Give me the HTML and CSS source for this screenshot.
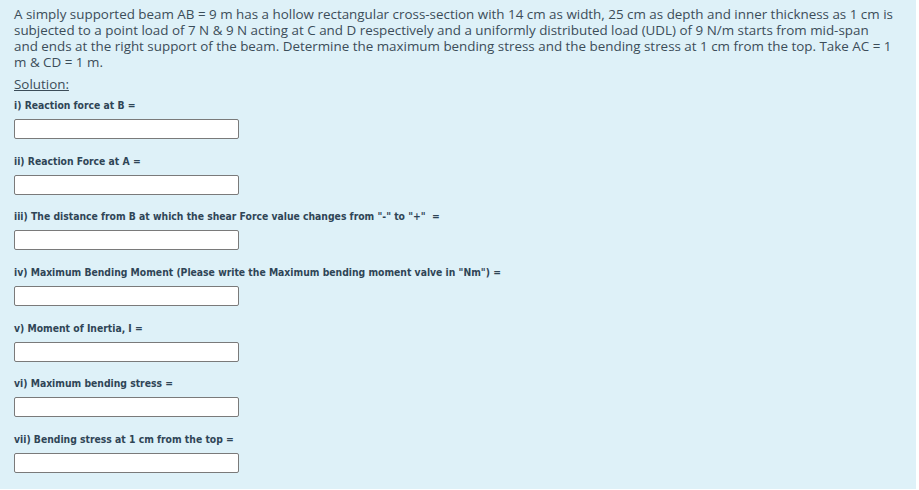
FILE: index.html
```html
<!DOCTYPE html>
<html>
<head>
<meta charset="utf-8">
<link rel="stylesheet" href="styles.css">
</head>
<body>
<div class="panel">
  <p class="question">A simply supported beam AB = 9 m has a hollow rectangular cross-section with 14 cm as width, 25 cm as depth and inner thickness as 1 cm is subjected to a point load of 7 N &amp; 9 N acting at C and D respectively and a uniformly distributed load (UDL) of 9 N/m starts from mid-span and ends at the right support of the beam. Determine the maximum bending stress and the bending stress at 1 cm from the top. Take AC = 1 m &amp; CD = 1 m.</p>
  <p class="solution">Solution:</p>
  <div class="item"><div class="label">i) Reaction force at B =</div><input class="answer" type="text"></div>
  <div class="item"><div class="label">ii) Reaction Force at A =</div><input class="answer" type="text"></div>
  <div class="item"><div class="label">iii) The distance from B at which the shear Force value changes from "-" to "+" &nbsp;=</div><input class="answer" type="text"></div>
  <div class="item"><div class="label">iv) Maximum Bending Moment (Please write the Maximum bending moment valve in "Nm") =</div><input class="answer" type="text"></div>
  <div class="item"><div class="label">v) Moment of Inertia, I =</div><input class="answer" type="text"></div>
  <div class="item"><div class="label">vi) Maximum bending stress =</div><input class="answer" type="text"></div>
  <div class="item"><div class="label">vii) Bending stress at 1 cm from the top =</div><input class="answer" type="text"></div>
</div>
</body>
</html>
```
FILE: styles.css
```css
html, body {
  margin: 0;
  padding: 0;
  background: #ffffff;
}
.panel {
  width: 916px;
  height: 489px;
  box-sizing: border-box;
  background: #def1f8;
  padding: 6px 22px 0 14px;
  font-family: "Open Sans", "Liberation Sans", sans-serif;
  color: #3c4d59;
}
.question {
  margin: 0;
  font-size: 13.4px;
  line-height: 16px;
}
.solution {
  margin: 6px 0 6px 0;
  font-size: 13.4px;
  line-height: 16px;
  text-decoration: underline;
}
.item {
  display: flex;
  flex-direction: column;
  align-items: flex-start;
  margin-bottom: 14.7px;
}
.label {
  font-family: "DejaVu Sans Condensed", "DejaVu Sans", sans-serif;
  font-stretch: condensed;
  font-weight: 700;
  font-size: 10.3px;
  line-height: 15px;
  color: #2f4556;
  margin-bottom: 6px;
  white-space: pre;
}
.answer {
  width: 225px;
  height: 20px;
  box-sizing: border-box;
  margin: 0;
  border: 1px solid #7a7a7a;
  border-radius: 2px;
  background: #ffffff;
  padding: 0 4px;
}
```
